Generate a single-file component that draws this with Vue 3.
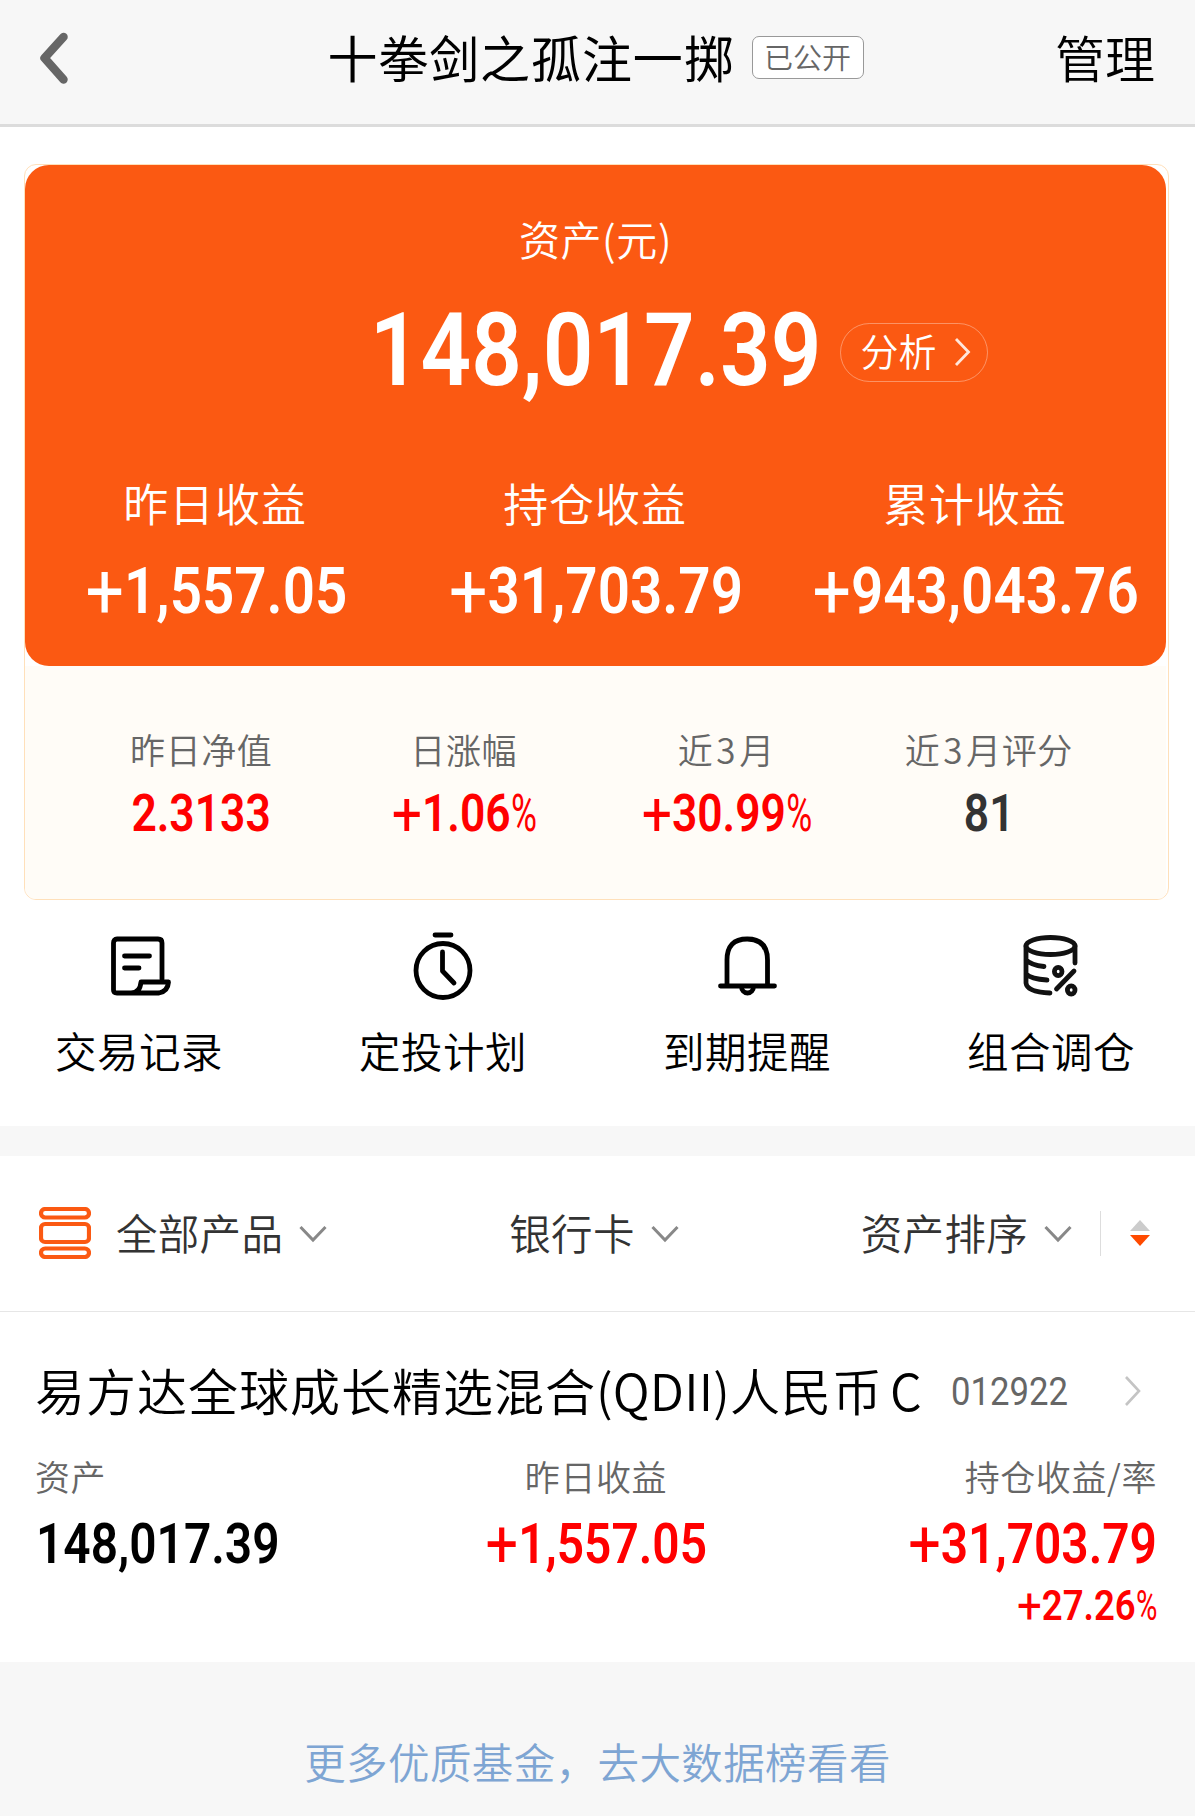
<template>
    <div class="page">
        <header class="navbar">
            <svg class="back" width="34" height="58" viewBox="0 0 34 58">
                <path d="M27.500 8 L8.500 29 L27.500 50.500" fill="none" stroke="#666" stroke-width="8.500" stroke-linecap="round" stroke-linejoin="round" />
            </svg>
            <div class="title-wrap">
                <h1 class="title">十拳剑之孤注一掷</h1>
                <span class="badge">已公开</span>
            </div>
            <span class="manage">管理</span>
        </header>

        <section class="card">
            <div class="card-main">
                <div class="asset-label">资产(元)</div>
                <div class="asset-row">
                    <div class="asset-value"><span class="num">148,017.39</span></div>
                    <div class="analyse">
                        <span>分析</span>
                        <svg width="18" height="34" viewBox="0 0 18 34">
                            <path d="M2 4 L14.500 17 L2 30" fill="none" stroke="#fff" stroke-opacity="0.85" stroke-width="2.800" />
                        </svg>
                    </div>
                </div>
                <div class="profits">
                    <div v-for="item in profits" :key="item.label" class="profit">
                        <div class="profit-label">{{ item.label }}</div>
                        <div class="profit-value"><span class="num"><i>+</i>{{ item.value }}</span></div>
                    </div>
                </div>
            </div>
            <div class="card-sub">
                <div v-for="item in stats" :key="item.label" class="stat">
                    <div class="stat-label">
                        <template v-if="item.months">近<span class="months">{{ item.months }}</span></template>{{ item.label }}
                    </div>
                    <div :class="['stat-value', { dark: item.dark }]">
                        <span class="num"><i v-if="item.sign">+</i>{{ item.value }}<b v-if="item.percent">%</b></span>
                    </div>
                </div>
            </div>
        </section>

        <nav class="actions">
            <div class="action">
                <svg width="70" height="76" viewBox="0 0 70 76" fill="none" stroke="#000" stroke-width="4.800" stroke-linecap="round" stroke-linejoin="round">
                    <path d="M58 51 V15 Q58 11 54 11 H13 Q9.500 11 9.500 15 V62 Q9.500 65 13 65 H55 Q64 63 64.500 54 H37 Q36 65 27 65" />
                    <path d="M20.500 28 H45.500 M20.500 40 H35" />
                </svg>
                <span>交易记录</span>
            </div>
            <div class="action">
                <svg width="70" height="76" viewBox="0 0 70 76" fill="none" stroke="#000" stroke-width="4.800" stroke-linecap="round" stroke-linejoin="round">
                    <circle cx="35" cy="42.500" r="27" />
                    <path d="M27 7 H43 M34.500 24 V43 L46 55" />
                </svg>
                <span>定投计划</span>
            </div>
            <div class="action">
                <svg width="70" height="76" viewBox="0 0 70 76" fill="none" stroke="#000" stroke-width="4.800" stroke-linecap="round" stroke-linejoin="round">
                    <path d="M15 57 V32 Q15 11 35.200 11 Q55.500 11 55.500 32 V57 M8.500 58 H62.500" />
                    <path d="M29.500 58.500 A6 6.500 0 0 0 41.500 58.500" />
                </svg>
                <span>到期提醒</span>
            </div>
            <div class="action">
                <svg width="70" height="76" viewBox="0 0 70 76" fill="none" stroke="#111" stroke-width="4.800" stroke-linecap="round">
                    <ellipse cx="34.500" cy="18" rx="24.500" ry="8.500" />
                    <path d="M10 18 V55 Q11 64 34 65 M59 18 V35 M10 32 Q15 37 28 38.500 M10 46 Q15 51 31 52 M58 43 L40.500 61" />
                    <ellipse cx="42.200" cy="43.500" rx="3.800" ry="4.200" />
                    <ellipse cx="55.200" cy="62" rx="3.800" ry="4.200" />
                </svg>
                <span>组合调仓</span>
            </div>
        </nav>

        <div class="filters">
            <div class="filter filter-all">
                <svg class="stack" width="52" height="52" viewBox="0 0 52 52" fill="none" stroke="#fb5912" stroke-width="4.200">
                    <rect x="2" y="2" width="48" height="8.500" rx="4.200" />
                    <rect x="2" y="17" width="48" height="18" rx="4" />
                    <rect x="2" y="41.500" width="48" height="8.500" rx="4.200" />
                </svg>
                <span>全部产品</span>
                <svg class="arrow" width="28" height="18" viewBox="0 0 28 18"><path d="M1.500 2 L14 15 L26.500 2" /></svg>
            </div>
            <div class="filter filter-bank">
                <span>银行卡</span>
                <svg class="arrow" width="28" height="18" viewBox="0 0 28 18"><path d="M1.500 2 L14 15 L26.500 2" /></svg>
            </div>
            <div class="filter filter-sort">
                <span>资产排序</span>
                <svg class="arrow" width="28" height="18" viewBox="0 0 28 18"><path d="M1.500 2 L14 15 L26.500 2" /></svg>
                <div class="divider"></div>
                <svg class="sorter" width="20" height="27" viewBox="0 0 20 27">
                    <path d="M0 11 L10 0 L20 11 Z" fill="#ccc" />
                    <path d="M0 15 H20 L10 26 Z" fill="#ff4a00" />
                </svg>
            </div>
        </div>

        <section class="fund">
            <div class="fund-head">
                <h2 class="fund-name">易方达全球成长精选混合<em>(QDII)</em>人民币<em class="share">C</em></h2>
                <span class="fund-code">012922</span>
                <svg class="more" width="20" height="32" viewBox="0 0 20 32">
                    <path d="M3 2 L16 16 L3 30" fill="none" stroke="#c4c4c4" stroke-width="2.600" />
                </svg>
            </div>
            <div class="fund-data">
                <div class="cell">
                    <div class="cell-label">资产</div>
                    <div class="cell-value first"><span class="num">148,017.39</span></div>
                </div>
                <div class="cell center">
                    <div class="cell-label">昨日收益</div>
                    <div class="cell-value red"><span class="num"><i>+</i>1,557.05</span></div>
                </div>
                <div class="cell right">
                    <div class="cell-label">持仓收益/率</div>
                    <div class="cell-value red"><span class="num"><i>+</i>31,703.79</span></div>
                    <div class="cell-rate red"><span class="num"><i>+</i>27.26<b>%</b></span></div>
                </div>
            </div>
        </section>

        <footer class="more-funds">更多优质基金，去大数据榜看看</footer>
    </div>
</template>

<script setup>
const profits = [
    { label: '昨日收益', value: '1,557.05' },
    { label: '持仓收益', value: '31,703.79' },
    { label: '累计收益', value: '943,043.76' },
];

const stats = [
    { label: '昨日净值', value: '2.3133' },
    { label: '日涨幅', value: '1.06', sign: true, percent: true },
    { months: 3, label: '月', value: '30.99', sign: true, percent: true },
    { months: 3, label: '月评分', value: '81', dark: true },
];
</script>

<style>
body {
    margin: 0;
    background: #f7f7f7;
}
</style>

<style scoped>
.page {
    width: 1195px;
    height: 1816px;
    overflow: hidden;
    background: #fff;
    color: #000;
    font-family: 'Noto Sans CJK SC', sans-serif;
    font-weight: 350;
    display: flex;
    flex-direction: column;
}
.page svg {
    display: block;
    flex: none;
}

/* 数字：窄体 */
.num {
    display: inline-block;
    font-family: Roboto, 'Liberation Sans', sans-serif;
    font-weight: 600;
    white-space: nowrap;
    transform: scaleX(0.87);
}
.num i {
    font-style: normal;
    font-size: 1.2em;
    font-weight: 400;
    line-height: 0;
    vertical-align: -0.06em;
}
.num b {
    display: inline-block;
    font-weight: 400;
    transform: scaleX(0.8);
    transform-origin: left;
    margin-right: -0.15em;
}

/* 顶部导航 */
.navbar {
    flex: none;
    box-sizing: border-box;
    height: 127px;
    padding: 0 40px 12px 36px;
    background: #f7f7f7;
    border-bottom: 3px solid #dcdcdc;
    display: grid;
    grid-template-columns: 1fr auto 1fr;
    align-items: center;
}
.back {
    margin-top: 4px;
}
.title-wrap {
    display: flex;
    align-items: center;
    gap: 17px;
}
.title {
    margin: 0;
    font-size: 50px;
    line-height: 60px;
    letter-spacing: 0.9px;
    font-weight: 400;
}
.badge {
    box-sizing: border-box;
    width: 112px;
    height: 43px;
    margin-top: 3px;
    border: 1.5px solid #999;
    border-radius: 7px;
    background: #fff;
    color: #666;
    font-size: 29px;
    line-height: 38px;
    text-align: center;
}
.manage {
    justify-self: end;
    font-size: 50px;
    line-height: 60px;
}

/* 资产卡片 */
.card {
    flex: none;
    box-sizing: border-box;
    width: 1145px;
    height: 736px;
    margin: 37px 0 0 24px;
    padding-right: 2px;
    border: 1px solid #ffe0ba;
    border-radius: 12px;
    overflow: hidden;
}
.card-main {
    box-sizing: border-box;
    height: 501px;
    padding-top: 43px;
    border-radius: 24px;
    background: #fb5912;
    color: #fff;
}
.asset-label {
    font-size: 41px;
    line-height: 60px;
    letter-spacing: 0.6px;
    text-align: center;
}
.asset-row {
    display: grid;
    grid-template-columns: minmax(0, 1fr) 444px minmax(0, 1fr);
    align-items: center;
    height: 120px;
    margin-top: 22px;
}
.asset-value {
    grid-column: 2;
    display: flex;
    justify-content: center;
    font-size: 102px;
    line-height: 120px;
}
.analyse {
    box-sizing: border-box;
    width: 148px;
    height: 59px;
    margin: 4px 0 0 22px;
    padding: 0 15px 0 20px;
    border: 1.5px solid rgba(255, 255, 255, 0.35);
    border-radius: 30px;
    display: flex;
    align-items: center;
    justify-content: space-between;
    font-size: 38px;
    line-height: 52px;
}
.analyse span {
    margin-top: -4px;
}
.profits {
    display: grid;
    grid-template-columns: repeat(3, 380px);
    margin-top: 63px;
    text-align: center;
}
.profit-label {
    font-size: 45px;
    line-height: 60px;
    letter-spacing: 0.9px;
}
.profit-value {
    display: flex;
    justify-content: center;
    margin: 20px -2px 0 0;
    font-size: 65px;
    line-height: 76px;
}
.card-sub {
    box-sizing: border-box;
    height: 233px;
    padding: 58px 46px 0 45px;
    background: #fffcf7;
    display: grid;
    grid-template-columns: repeat(4, 262.5px);
    text-align: center;
}
.stat-label {
    color: #666;
    font-size: 35px;
    line-height: 50px;
    letter-spacing: 0.6px;
}
.months {
    margin: 0 3px;
}
.stat-value {
    margin-top: 5px;
    color: #f00;
    font-size: 51px;
    line-height: 60px;
}
.stat-value.dark {
    color: #333;
}

/* 功能入口 */
.actions {
    flex: none;
    box-sizing: border-box;
    height: 226px;
    padding: 28px 60px 0 55px;
    display: flex;
    justify-content: space-between;
}
.action {
    width: 168px;
    display: flex;
    flex-direction: column;
    align-items: center;
    font-size: 41.500px;
    line-height: 60px;
    letter-spacing: 0.5px;
    white-space: nowrap;
}
.action span {
    margin-top: 16px;
}

/* 筛选 */
.filters {
    flex: none;
    box-sizing: border-box;
    height: 186px;
    padding: 0 45px 1px 39px;
    border-top: 30px solid #f7f7f7;
    border-bottom: 1px solid #e6e6e6;
    display: flex;
    align-items: center;
    justify-content: space-between;
    color: #333;
    font-size: 41.500px;
    line-height: 60px;
    letter-spacing: 0.3px;
}
.filter {
    display: flex;
    align-items: center;
}
.filter span {
    margin-top: -3px;
}
.stack {
    margin: -1px 25px 0 0;
}
.arrow {
    margin: 1px 0 0 16px;
}
.arrow path {
    fill: none;
    stroke: #888;
    stroke-width: 3;
}
.divider {
    width: 1px;
    height: 45px;
    margin: 0 29px 0 28px;
    background: #ddd;
}

/* 持仓基金 */
.fund {
    flex: none;
    box-sizing: border-box;
    height: 350px;
    padding: 47px 38px 0 35px;
}
.fund-head {
    display: flex;
    align-items: center;
    height: 60px;
}
.fund-name {
    margin: 0;
    width: 888px;
    font-size: 50px;
    line-height: 60px;
    letter-spacing: 1px;
    font-weight: 350;
    white-space: nowrap;
}
.fund-name em {
    font-style: normal;
    letter-spacing: 0.2px;
}
.fund-name .share {
    margin-left: 7px;
}
.fund-code {
    width: 118px;
    margin: 5px 0 0 28px;
    color: #666;
    font-family: Roboto, sans-serif;
    font-size: 39px;
    font-weight: 400;
    transform: scaleX(0.89);
    transform-origin: left;
}
.more {
    margin: 4px 0 0 54px;
}
.fund-data {
    display: grid;
    grid-template-columns: 1fr 1fr 1fr;
    margin-top: 32px;
}
.cell-label {
    color: #666;
    font-size: 35px;
    line-height: 50px;
    letter-spacing: 0.6px;
}
.cell-value {
    margin-top: 6px;
    font-size: 55px;
    line-height: 64px;
}
.cell-value.first {
    padding-left: 1px;
}
.cell-rate {
    margin-top: 1px;
    font-size: 42px;
    line-height: 50px;
}
.cell .num {
    transform-origin: left;
}
.center {
    text-align: center;
}
.center .num {
    transform-origin: center;
}
.right {
    text-align: right;
}
.right .num {
    transform-origin: right;
}
.red {
    color: #f00;
}

.more-funds {
    flex: 1;
    padding-top: 69px;
    background: #f7f7f7;
    color: #7ea5d3;
    font-size: 41.500px;
    line-height: 60px;
    letter-spacing: 0.4px;
    text-align: center;
}
</style>
